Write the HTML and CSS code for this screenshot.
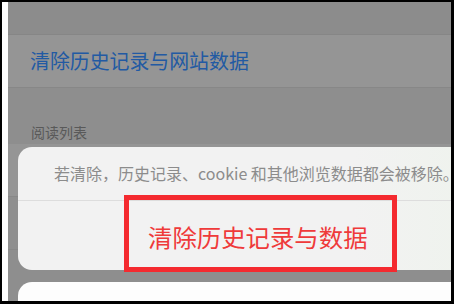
FILE: index.html
```html
<!DOCTYPE html>
<html lang="zh-CN">
<head>
  <meta charset="UTF-8">
  <meta name="viewport" content="width=device-width, initial-scale=1.0">
  <title>清除历史记录与网站数据</title>
  <link rel="stylesheet" href="styles.css">
</head>
<body>
  <div class="screen">
    <div class="edge"></div>
    <div class="ui">
      <div class="top-band"></div>
      <div class="row link-row">清除历史记录与网站数据</div>
      <div class="gap"></div>
      <div class="section-title">阅读列表</div>
      <div class="row ghost-row"></div>
      <div class="row ghost-row"></div>

      <!-- action sheet -->
      <div class="sheet">
        <div class="sheet-msg"><span>若清除，历史记录、cookie 和其他浏览数据都会被移除。</span></div>
        <div class="sheet-btn">清除历史记录与数据</div>
      </div>
      <div class="cancel"></div>

      <div class="mark"></div>
    </div>
  </div>
</body>
</html>
```

FILE: styles.css
```css
body { margin: 0; background: #000; font-family: "Noto Sans CJK SC", "Noto Sans", sans-serif; }
.screen { display: flex; width: 449px; height: 299px; margin: 2px 0 0 2px; overflow: hidden; }
.edge { width: 6px; background: #fdfdfd; flex: none; }
.ui { flex: 1; position: relative; background: #8e8e8e; overflow: hidden; }
.top-band { height: 32px; background: #8c8c8c; border-bottom: 1px solid #868686; }
.row { background: #959595; }
.link-row { height: 52px; line-height: 52px; padding-left: 22px; font-size: 19.9px; color: #225aa3; border-bottom: 1px solid #878787; }
.gap { height: 34px; }
.section-title { padding-left: 23px; font-size: 14px; color: #595959; line-height: 20px; height: 22px; }
.ghost-row { height: 52px; border-bottom: 1px solid #888; }
.ghost-row + .ghost-row { background: #8f8f8f; }
.sheet { position: absolute; left: 10px; top: 145px; width: 480px; height: 123px; background: linear-gradient(to right, #f2f2f2 70%, #eef3ec); border-radius: 14px; }
.sheet-msg { height: 53px; line-height: 53px; padding-left: 36px; font-size: 16px; color: #8c8c8c; white-space: nowrap; border-bottom: 1px solid #dddddd; }
.sheet-btn { height: 69px; line-height: 71px; padding-left: 130px; font-size: 24.4px; color: #ef3a3a; white-space: nowrap; }
.cancel { position: absolute; left: 10px; top: 280px; width: 480px; height: 60px; background: #fdfdfd; border-radius: 14px; }
.mark { position: absolute; left: 116px; top: 193px; width: 263px; height: 67px; border: 5px solid #f42a2f; }
```
